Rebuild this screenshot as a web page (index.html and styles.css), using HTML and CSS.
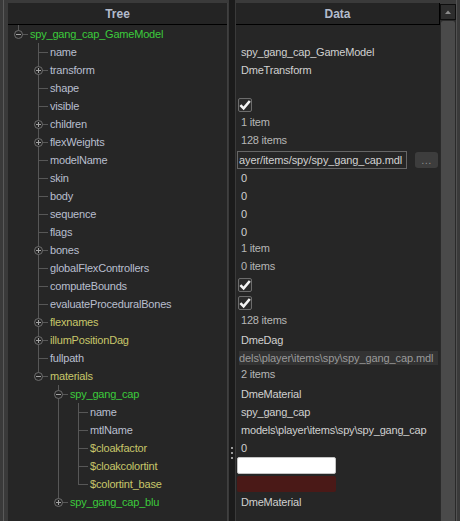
FILE: index.html
```html
<!DOCTYPE html>
<html>
<head>
<meta charset="utf-8">
<link rel="stylesheet" href="styles.css">
</head>
<body>
<div class="app">
  <div class="edge"></div>
  <section class="pane tree">
    <div class="head">Tree</div>
    <div class="rows">
      <div class="row"><span class="c end"><i class="exp minus"></i></span><span class="lbl green">spy_gang_cap_GameModel</span></div>
      <div class="row"><span class="c"></span><span class="c mid"></span><span class="lbl">name</span></div>
      <div class="row"><span class="c"></span><span class="c mid"><i class="exp plus"></i></span><span class="lbl">transform</span></div>
      <div class="row"><span class="c"></span><span class="c mid"></span><span class="lbl">shape</span></div>
      <div class="row"><span class="c"></span><span class="c mid"></span><span class="lbl">visible</span></div>
      <div class="row"><span class="c"></span><span class="c mid"><i class="exp plus"></i></span><span class="lbl">children</span></div>
      <div class="row"><span class="c"></span><span class="c mid"><i class="exp plus"></i></span><span class="lbl">flexWeights</span></div>
      <div class="row"><span class="c"></span><span class="c mid"></span><span class="lbl">modelName</span></div>
      <div class="row"><span class="c"></span><span class="c mid"></span><span class="lbl">skin</span></div>
      <div class="row"><span class="c"></span><span class="c mid"></span><span class="lbl">body</span></div>
      <div class="row"><span class="c"></span><span class="c mid"></span><span class="lbl">sequence</span></div>
      <div class="row"><span class="c"></span><span class="c mid"></span><span class="lbl">flags</span></div>
      <div class="row"><span class="c"></span><span class="c mid"><i class="exp plus"></i></span><span class="lbl">bones</span></div>
      <div class="row"><span class="c"></span><span class="c mid"></span><span class="lbl">globalFlexControllers</span></div>
      <div class="row"><span class="c"></span><span class="c mid"></span><span class="lbl">computeBounds</span></div>
      <div class="row"><span class="c"></span><span class="c mid"></span><span class="lbl">evaluateProceduralBones</span></div>
      <div class="row"><span class="c"></span><span class="c mid"><i class="exp plus"></i></span><span class="lbl yellow">flexnames</span></div>
      <div class="row"><span class="c"></span><span class="c mid"><i class="exp plus"></i></span><span class="lbl yellow">illumPositionDag</span></div>
      <div class="row"><span class="c"></span><span class="c mid"></span><span class="lbl">fullpath</span></div>
      <div class="row"><span class="c"></span><span class="c end"><i class="exp minus"></i></span><span class="lbl yellow">materials</span></div>
      <div class="row"><span class="c"></span><span class="c"></span><span class="c mid"><i class="exp minus"></i></span><span class="lbl green">spy_gang_cap</span></div>
      <div class="row"><span class="c"></span><span class="c"></span><span class="c v"></span><span class="c mid"></span><span class="lbl">name</span></div>
      <div class="row"><span class="c"></span><span class="c"></span><span class="c v"></span><span class="c mid"></span><span class="lbl">mtlName</span></div>
      <div class="row"><span class="c"></span><span class="c"></span><span class="c v"></span><span class="c mid"></span><span class="lbl yellow">$cloakfactor</span></div>
      <div class="row"><span class="c"></span><span class="c"></span><span class="c v"></span><span class="c mid"></span><span class="lbl yellow">$cloakcolortint</span></div>
      <div class="row"><span class="c"></span><span class="c"></span><span class="c v"></span><span class="c end"></span><span class="lbl yellow">$colortint_base</span></div>
      <div class="row"><span class="c"></span><span class="c"></span><span class="c end"><i class="exp plus"></i></span><span class="lbl green">spy_gang_cap_blu</span></div>
    </div>
  </section>
  <div class="splitter"><i class="dot"></i><i class="dot"></i><i class="dot"></i></div>
  <section class="pane data">
    <div class="head dhead">Data</div>
    <div class="rows">
      <div class="drow"></div>
      <div class="drow">spy_gang_cap_GameModel</div>
      <div class="drow">DmeTransform</div>
      <div class="drow"></div>
      <div class="drow cb"><span class="chk"><svg viewBox="0 0 12 12" width="12" height="12"><path d="M1.4 6.2 L4.6 9.4 L10.8 2.0" fill="none" stroke="#f4f4f4" stroke-width="2.6"/></svg></span></div>
      <div class="drow count">1 item</div>
      <div class="drow count">128 items</div>
      <div class="drow inp"><span class="field">ayer/items/spy/spy_gang_cap.mdl</span><span class="btn">...</span></div>
      <div class="drow">0</div>
      <div class="drow">0</div>
      <div class="drow">0</div>
      <div class="drow">0</div>
      <div class="drow count">1 item</div>
      <div class="drow count">0 items</div>
      <div class="drow cb"><span class="chk"><svg viewBox="0 0 12 12" width="12" height="12"><path d="M1.4 6.2 L4.6 9.4 L10.8 2.0" fill="none" stroke="#f4f4f4" stroke-width="2.6"/></svg></span></div>
      <div class="drow cb"><span class="chk"><svg viewBox="0 0 12 12" width="12" height="12"><path d="M1.4 6.2 L4.6 9.4 L10.8 2.0" fill="none" stroke="#f4f4f4" stroke-width="2.6"/></svg></span></div>
      <div class="drow count">128 items</div>
      <div class="drow">DmeDag</div>
      <div class="drow path"><span class="pathbox">dels\player\items\spy\spy_gang_cap.mdl</span></div>
      <div class="drow count">2 items</div>
      <div class="drow">DmeMaterial</div>
      <div class="drow">spy_gang_cap</div>
      <div class="drow">models\player\items\spy\spy_gang_cap</div>
      <div class="drow">0</div>
      <div class="drow sw"><span class="swatch white"></span></div>
      <div class="drow sw"><span class="swatch red"></span></div>
      <div class="drow">DmeMaterial</div>
    </div>
  </section>
  <div class="scroll">
    <div class="sbtn"><svg viewBox="0 0 6 4" width="6" height="4"><path d="M0 4 L3 0.5 L6 4 Z" fill="#8a8a8a"/></svg></div>
    <div class="thumb"></div>
  </div>
  <div class="edge2"></div>
</div>
</body>
</html>
```

FILE: styles.css
```css
* { box-sizing: border-box; }
html, body { margin: 0; padding: 0; }
body {
  background: #3a3a3a;
  width: 460px;
  height: 521px;
  overflow: hidden;
  font-family: "Liberation Sans", Arial, sans-serif;
  font-size: 11px;
  letter-spacing: -0.2px;
}
.app {
  display: flex;
  height: 521px;
}
.edge {
  width: 1px;
  margin: 0 4px 0 3px;
  background: #5a5a5a;
  flex: none;
}
.pane {
  margin-top: 3px;
  background: #262626;
  overflow: hidden;
  flex: none;
}
.tree {
  width: 220px;
  border-right: 1px solid #404040;
}
.data {
  width: 204px;
}
.head {
  height: 22px;
  border-bottom: 1px solid #000;
  background: #242424;
  display: flex;
  align-items: center;
  justify-content: center;
  font-weight: bold;
  font-size: 12px;
  letter-spacing: 0;
  color: #b3bbcc;
}
.dhead {
  border-right: 1px solid #000;
}
.rows {
  display: flex;
  flex-direction: column;
}
.row {
  height: 18px;
  display: flex;
  align-items: center;
  white-space: nowrap;
}
.c {
  width: 20px;
  height: 18px;
  flex: none;
  display: block;
}
.c.v {
  background: linear-gradient(#575757, #575757) 10px 0 / 1px 18px no-repeat;
}
.c.mid {
  background:
    linear-gradient(#575757, #575757) 10px 0 / 1px 18px no-repeat,
    linear-gradient(#575757, #575757) 10px 9px / 10px 1px no-repeat;
}
.c.end {
  background:
    linear-gradient(#575757, #575757) 10px 0 / 1px 10px no-repeat,
    linear-gradient(#575757, #575757) 10px 9px / 10px 1px no-repeat;
}
.exp {
  display: block;
  width: 9px;
  height: 9px;
  margin: 5px 0 0 6px;
  border-radius: 50%;
  border: 1px solid #6e6e6e;
}
.exp.minus {
  background:
    linear-gradient(#a4a4a4, #a4a4a4) 1px 3px / 5px 1px no-repeat,
    #262626;
}
.exp.plus {
  background:
    linear-gradient(#a4a4a4, #a4a4a4) 1px 3px / 5px 1px no-repeat,
    linear-gradient(#a4a4a4, #a4a4a4) 3px 1px / 1px 5px no-repeat,
    #262626;
}
.lbl {
  margin-left: 2px;
  color: #b9bfcf;
}
.lbl.green { color: #3ccb3c; }
.lbl.yellow { color: #c8c66a; }

.splitter {
  width: 6px;
  margin: 0 1px;
  background: #1b1b1b;
  flex: none;
  display: flex;
  flex-direction: column;
  align-items: center;
  padding-top: 447px;
  gap: 3px;
}
.dot {
  display: block;
  width: 2px;
  height: 2px;
  background: #9a9a9a;
}

.drow {
  height: 18px;
  display: flex;
  align-items: center;
  padding-left: 5px;
  color: #d0d0d0;
  white-space: nowrap;
  overflow: hidden;
}
.drow.count {
  padding-bottom: 4px;
  color: #b6b6b6;
}
.drow.cb {
  padding-left: 2px;
  align-items: flex-start;
  padding-top: 1px;
}
.chk {
  width: 14px;
  height: 14px;
  border: 1px solid #6c6c6c;
  border-radius: 2px;
  background: #2b2b2b;
  display: flex;
  align-items: center;
  justify-content: center;
}
.drow.inp {
  padding-left: 1px;
}
.field {
  width: 170px;
  height: 18px;
  border: 1px solid #666;
  display: flex;
  align-items: center;
  padding-left: 1px;
  color: #d2d2d2;
  letter-spacing: -0.1px;
  flex: none;
}
.btn {
  width: 23px;
  height: 16px;
  margin-left: 8px;
  background: #3d3d3d;
  border-radius: 3px;
  color: #8c8c8c;
  display: flex;
  align-items: center;
  justify-content: center;
  letter-spacing: 0.5px;
  flex: none;
}
.drow.path {
  padding-left: 3px;
}
.pathbox {
  width: 199px;
  height: 14px;
  background: #333333;
  display: flex;
  align-items: center;
  padding-left: 0;
  color: #9a9a9a;
  letter-spacing: -0.1px;
  flex: none;
}
.drow.sw {
  padding-left: 1px;
  align-items: flex-start;
}
.swatch {
  display: block;
  width: 99px;
  border-radius: 2px;
}
.swatch.white {
  height: 17px;
  background: #ffffff;
  border: 1px solid #c4c4c4;
}
.swatch.red {
  height: 16px;
  margin-top: 1px;
  background: #4a1917;
}

.scroll {
  width: 16px;
  margin-top: 4px;
  background: #2a2a2a;
  display: flex;
  flex-direction: column;
  flex: none;
}
.sbtn {
  height: 16px;
  border: 1px solid #0e0e0e;
  background: #2d2d2d;
  display: flex;
  align-items: center;
  justify-content: center;
  flex: none;
}
.thumb {
  flex: 1;
  margin: 1px 1px 0 1px;
  background: #4a4a4a;
  border-radius: 2px 2px 0 0;
}
.edge2 {
  width: 1px;
  background: #525252;
  flex: none;
}
```
